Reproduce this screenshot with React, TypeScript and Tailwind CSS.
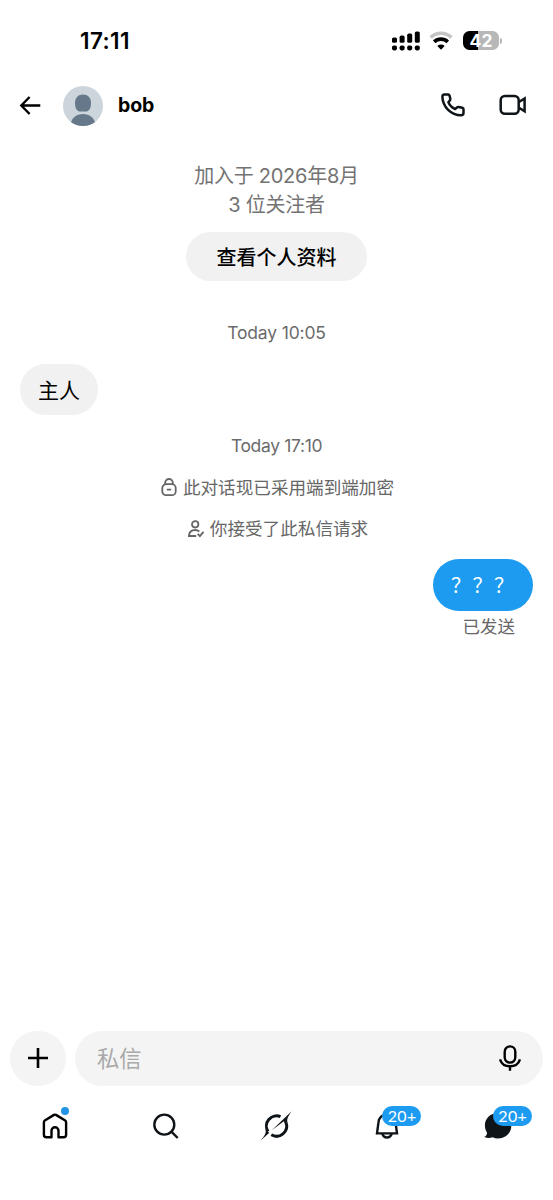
import type { ReactNode } from "react";

function StatusBar() {
  return (
    <div className="flex h-[81px] items-center pr-[51px] pl-[80px]">
      <span className="pt-[2px] text-[22.5px] leading-none font-semibold tracking-[0.4px]">
        17:11
      </span>
      <div className="ml-auto flex items-center">
        {/* Dual SIM signal */}
        <svg width="28" height="20" viewBox="0 0 28 20" fill="black">
          <rect x="0" y="6.5" width="5" height="5.3" rx="1.6" />
          <rect x="7.6" y="4.6" width="5" height="7.2" rx="1.6" />
          <rect x="15.2" y="2.6" width="5" height="9.2" rx="1.6" />
          <rect x="22.8" y="0.5" width="5" height="11.3" rx="1.6" />
          <rect x="0" y="14.4" width="5" height="5" rx="1.8" />
          <rect x="7.6" y="14.4" width="5" height="5" rx="1.8" />
          <rect x="15.2" y="14.4" width="5" height="5" rx="1.8" />
          <rect x="22.8" y="14.4" width="5" height="5" rx="1.8" />
        </svg>
        <svg className="ml-[9px]" width="24" height="20" viewBox="0 0 24 20" fill="none">
          <path d="M1.6 6.4a15 15 0 0 1 20.8 0" stroke="#c4c4c4" strokeWidth="3.6" />
          <path d="M5.2 10.9a9.7 9.7 0 0 1 13.6 0" stroke="black" strokeWidth="3.6" />
          <path d="M8.3 14.9a5.4 5.4 0 0 1 7.4 0L12 18.7z" fill="black" />
        </svg>
        <div className="ml-[10px] flex h-[19px] w-9 items-center justify-center rounded-[6.5px] bg-gradient-to-r from-black from-[42%] to-[#b7b7b7] to-[42%]">
          <span className="pt-px text-[17.5px] leading-none font-bold text-white">42</span>
        </div>
        <div className="ml-px h-[6px] w-[2px] rounded-r-full bg-[#b7b7b7]" />
      </div>
    </div>
  );
}

function Header() {
  return (
    <header className="flex h-[49px] items-center pr-[26px] pl-[19px]">
      <svg width="22" height="20" viewBox="0 0 22 20" fill="none" stroke="black" strokeWidth="2.4">
        <path d="M21.3 9.5H2.8M10.6 1 2.3 9.5l8.3 8.500" />
      </svg>
      <svg className="ml-[22px]" width="40" height="40" viewBox="0 0 40 40">
        <clipPath id="avatar">
          <circle cx="20" cy="20" r="20" />
        </clipPath>
        <g clipPath="url(#avatar)">
          <rect width="40" height="40" fill="#cbd5db" />
          <path
            d="M20 8.6c4.700 0 8 3.200 8 8.400 0 5.600-2.200 8.600-5.400 8.600h-5.200C14.200 25.600 12 22.600 12 17c0-5.200 3.300-8.400 8-8.400z"
            fill="#66788a"
          />
          <path d="M7.600 38c1.200-6.300 5.800-10 12.400-10s11.200 3.700 12.400 10v4H7.600z" fill="#66788a" />
        </g>
      </svg>
      <span className="ml-[15px] text-[19.5px] font-bold tracking-[-0.1px]">bob</span>
      <svg
        className="mb-px ml-auto"
        width="24"
        height="24"
        viewBox="0 0 24 24"
        fill="none"
        stroke="#0f1419"
        strokeWidth="2.5"
        strokeLinejoin="round"
      >
        <path d="M3.300 1.600h3.800c.8 0 1.300.5 1.500 1.200l.7 3c.1.600 0 1.100-.4 1.600L7.400 9.200c1.300 3.100 3.700 5.500 6.800 6.800l1.800-1.600c.5-.4 1-.5 1.600-.4l3.700.7c.7.2 1.200.7 1.200 1.500v3.600c0 1.500-1 2.500-2.500 2.500C10.200 22.300 1.700 13.900 1.400 4c0-1.400.6-2.400 1.900-2.400z" />
      </svg>
      <svg
        className="mb-px ml-[34px]"
        width="28"
        height="22"
        viewBox="0 0 28 22"
        fill="none"
        stroke="#0f1419"
        strokeWidth="2.5"
      >
        <rect x="1.700" y="2" width="18" height="17.800" rx="4.200" />
        <path d="m20 8 5.600-3.500v12.800L20 13.800" />
      </svg>
    </header>
  );
}

function LockIcon() {
  return (
    <svg width="16" height="19" viewBox="0 0 16 19" fill="none" stroke="#666" strokeWidth="1.800">
      <rect x="1.300" y="6.200" width="13.400" height="11" rx="3.800" />
      <path d="M4.200 6.400V4.800a3.800 3.800 0 0 1 7.600 0v1.600M5.800 11.700h4.400" />
    </svg>
  );
}

function PersonCheckIcon() {
  return (
    <svg width="17" height="18" viewBox="0 0 17 18" fill="none" stroke="#666" strokeWidth="1.800">
      <circle cx="8.200" cy="4.300" r="3.200" />
      <path d="M12.300 11.500c-1.100-1-2.600-1.500-4.200-1.500-3.300 0-5.900 2.100-6.200 6h7.300" />
      <path d="m10.700 13.900 2.200 2.300 3.600-4.300" />
    </svg>
  );
}

function Notice({ icon, children }: { icon: ReactNode; children: ReactNode }) {
  return (
    <div className="flex h-[41px] items-center justify-center gap-[6px] pl-[2px] text-[17.6px] text-[#666]">
      {icon}
      <span className="pt-[2px]">{children}</span>
    </div>
  );
}

function Conversation() {
  return (
    <main className="flex flex-1 flex-col pt-8">
      <div className="text-center text-[20px] leading-[29px] tracking-[-0.25px] text-[#737373]">
        <p>加入于 2026年8月</p>
        <p>3 位关注者</p>
      </div>
      <button className="mt-3 h-[49px] w-[181px] self-center rounded-full bg-[#f1f1f1] pt-[2px] text-[20px] font-medium">
        查看个人资料
      </button>

      <p className="mt-10 text-center text-[17.5px] leading-6 tracking-[-0.15px] text-[#6b6b6b]">
        Today 10:05
      </p>
      <div className="mt-[19px] ml-5 flex h-[51px] items-center self-start rounded-full bg-[#f1f1f1] px-[18px] pt-[2px] text-[21px]">
        主人
      </div>

      <p className="mt-[19px] mb-[9px] text-center text-[17.5px] leading-6 tracking-[-0.35px] text-[#6b6b6b]">
        Today 17:10
      </p>
      <Notice icon={<LockIcon />}>此对话现已采用端到端加密</Notice>
      <Notice icon={<PersonCheckIcon />}>你接受了此私信请求</Notice>

      <div className="mt-[10px] mr-5 flex h-[52px] w-[100px] items-center self-end rounded-full bg-[#1d9bf0] pt-px pl-[18px] text-[20px] tracking-[1.5px] text-white">
        ？？？
      </div>
      <p className="mt-1 mr-[38px] self-end text-[17.5px] leading-6 text-[#666]">已发送</p>
    </main>
  );
}

function Composer() {
  return (
    <div className="flex h-[55px] gap-[9px] px-[10px]">
      <button className="flex w-14 items-center justify-center rounded-full bg-[#f4f4f4] pb-px">
        <svg width="20" height="20" viewBox="0 0 20 20" stroke="black" strokeWidth="2.600">
          <path d="M10 0v20M0 10h20" />
        </svg>
      </button>
      <div className="flex flex-1 items-center justify-between rounded-full bg-[#f4f4f4] pr-[21px] pb-px pl-[22px]">
        <span className="pt-px text-[22.3px] text-[#a9a9a9]">私信</span>
        <svg width="24" height="26" viewBox="0 0 24 26" fill="none" stroke="black" strokeWidth="2.400">
          <rect x="6.700" y="1.400" width="10.600" height="16.200" rx="5.300" />
          <path d="M2 14.300c1.400 4.300 5.300 7 10 7s8.600-2.700 10-7M12 21.300v4.500" />
        </svg>
      </div>
    </div>
  );
}

function CountBadge() {
  return (
    <span className="absolute -top-[5px] left-[9px] flex h-5 w-[39px] items-center justify-center rounded-full bg-[#1d9bf0] pl-px font-[family-name:Lato] text-[16px] leading-none tracking-[0.3px] text-white">
      20+
    </span>
  );
}

function TabBar() {
  return (
    <nav className="grid h-[114px] grid-cols-5 justify-items-center pt-[25px]">
      <div className="relative h-8 w-7">
        <svg
          className="mt-[2px]"
          width="28"
          height="26"
          viewBox="0 0 28 26"
          fill="none"
          stroke="black"
          strokeWidth="2.400"
          strokeLinejoin="round"
        >
          <path d="M2.900 9.200c0-.7.300-1.300.9-1.700L13 1.900c.7-.4 1.300-.4 2 0l9.200 5.600c.6.400.9 1 .9 1.700v12.500a2.600 2.600 0 0 1-2.600 2.600h-5v-6.500a3.500 3.500 0 0 0-7 0v6.500h-5a2.600 2.600 0 0 1-2.600-2.600z" />
        </svg>
        <span className="absolute -top-1 right-0 size-2 rounded-full bg-[#2494e4]" />
      </div>

      <svg
        className="mt-px"
        width="28"
        height="28"
        viewBox="0 0 28 28"
        fill="none"
        stroke="#0f1419"
        strokeWidth="2.400"
      >
        <circle cx="12.300" cy="12.600" r="10" />
        <path d="m19.400 19.700 6.300 6.300" />
      </svg>

      <svg width="32" height="30" viewBox="0 0 32 30" fill="#0f1419">
        <g fill="none" stroke="#0f1419" strokeWidth="3">
          <path d="M20.500 5.600A10.200 10.200 0 0 0 8 20.500" />
          <path d="M11.300 23.800A10.200 10.200 0 0 0 26 11.500" />
        </g>
        <path d="M5.500 18.800C6.500 22 4.500 25 .4 29.800L9.300 21.700z" />
        <path d="M11.800 19.300 31.600.2C28 5.500 26.600 8 27.500 11.300l-2.900 1-.8-2z" />
      </svg>

      <div className="relative h-8 w-7">
        <svg
          className="mt-px"
          width="28"
          height="28"
          viewBox="0 0 28 28"
          fill="none"
          stroke="#0f1419"
          strokeWidth="2.400"
        >
          <path d="M14 2.200c-4.700 0-8.200 3.500-8.500 8L4 21.400h20l-1.500-11.200c-.4-4.500-3.800-8-8.500-8z" />
          <path d="M9.300 21.600c.7 2.600 2.300 3.900 4.700 3.900s4-1.300 4.700-3.900" />
        </svg>
        <CountBadge />
      </div>

      <div className="relative h-8 w-7">
        <svg className="mt-px" width="28" height="28" viewBox="0 0 28 28" fill="#0f1419">
          <path d="M14.300 1C6.400 1 .9 6.500.9 13.300c0 2.900.7 5.100 2 7.100.4 1.700-.6 3.200-2.600 4.600 3.200 1.200 5.800 1.100 8.400.2 1.600.8 3.300 1.200 5.200 1.200 7.800 0 13.400-5.500 13.400-12.600S21.900 1 14.300 1z" />
        </svg>
        <CountBadge />
      </div>
    </nav>
  );
}

export default function App() {
  return (
    <div className="flex h-[1200px] w-[553px] flex-col overflow-hidden bg-white font-['Inter','Noto_Sans_CJK_SC',sans-serif] text-black">
      <StatusBar />
      <Header />
      <Conversation />
      <Composer />
      <TabBar />
    </div>
  );
}
